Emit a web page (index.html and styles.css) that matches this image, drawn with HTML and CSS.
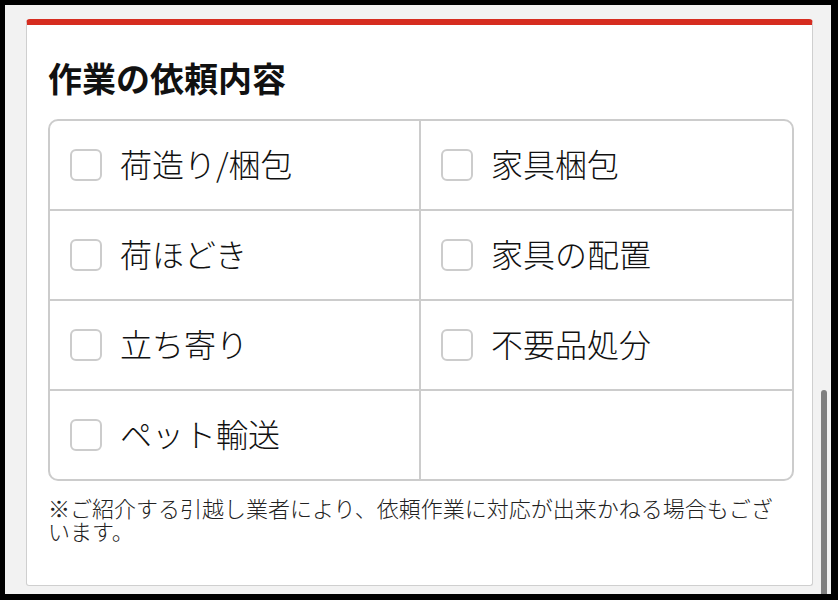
FILE: index.html
```html
<!DOCTYPE html>
<html lang="ja">
<head>
<meta charset="utf-8">
<title>作業の依頼内容</title>
<link rel="stylesheet" href="styles.css">
</head>
<body>
<div class="screen">
  <section class="card">
    <h2 class="title">作業の依頼内容</h2>
    <div class="options">
      <label class="opt"><span class="box"></span><span class="txt">荷造り/梱包</span></label>
      <label class="opt"><span class="box"></span><span class="txt">家具梱包</span></label>
      <label class="opt"><span class="box"></span><span class="txt">荷ほどき</span></label>
      <label class="opt"><span class="box"></span><span class="txt">家具の配置</span></label>
      <label class="opt"><span class="box"></span><span class="txt">立ち寄り</span></label>
      <label class="opt"><span class="box"></span><span class="txt">不要品処分</span></label>
      <label class="opt"><span class="box"></span><span class="txt">ペット輸送</span></label>
      <div class="opt empty"></div>
    </div>
    <p class="note">※ご紹介する引越し業者により、依頼作業に対応が出来かねる場合もございます。</p>
  </section>
  <div class="scrollbar"></div>
</div>
</body>
</html>
```

FILE: styles.css
```css
html, body {
  margin: 0;
  padding: 0;
  background: #000;
}
body {
  font-family: "Noto Sans CJK JP", "Noto Sans", sans-serif;
  color: #1a1a1a;
}
.screen {
  position: relative;
  margin: 5px 7px 0 5px;
  width: 826px;
  height: 589px;
  background: #f2f2f2;
  overflow: hidden;
  padding-top: 14px;
  box-sizing: border-box;
}
.card {
  margin: 0 18px 0 21px;
  height: 567px;
  box-sizing: border-box;
  background: #fff;
  border: 1px solid #cfcfcf;
  border-top: 6px solid #d62d20;
  border-radius: 4px 4px 3px 3px;
  padding: 0 18px 0 21px;
}
.title {
  margin: 0;
  padding-top: 33px;
  font-size: 34px;
  line-height: 40px;
  font-weight: 700;
  color: #111;
  height: 94px;
  box-sizing: border-box;
}
.options {
  display: grid;
  grid-template-columns: 1fr 1fr;
  border: 2px solid #cccccc;
  border-radius: 10px;
  overflow: hidden;
}
.opt {
  display: flex;
  align-items: center;
  height: 88px;
  padding-left: 20px;
  border-bottom: 2px solid #cccccc;
}
.opt:nth-child(odd) {
  border-right: 2px solid #cccccc;
}
.opt:nth-last-child(-n+2) {
  border-bottom: none;
}
.box {
  width: 32px;
  height: 32px;
  box-sizing: border-box;
  border: 2px solid #cccccc;
  border-radius: 6px;
  background: #fff;
  flex: none;
}
.txt {
  margin-left: 18px;
  padding-bottom: 4px;
  font-size: 32px;
  line-height: 40px;
  font-weight: 300;
  color: #111;
}
.note {
  margin: 15px 0 0;
  font-size: 22px;
  line-height: 23px;
  font-weight: 300;
  color: #222;
}
.scrollbar {
  position: absolute;
  left: 816px;
  top: 385px;
  width: 6px;
  height: 220px;
  border-radius: 3px;
  background: #7f7f7f;
}
```
